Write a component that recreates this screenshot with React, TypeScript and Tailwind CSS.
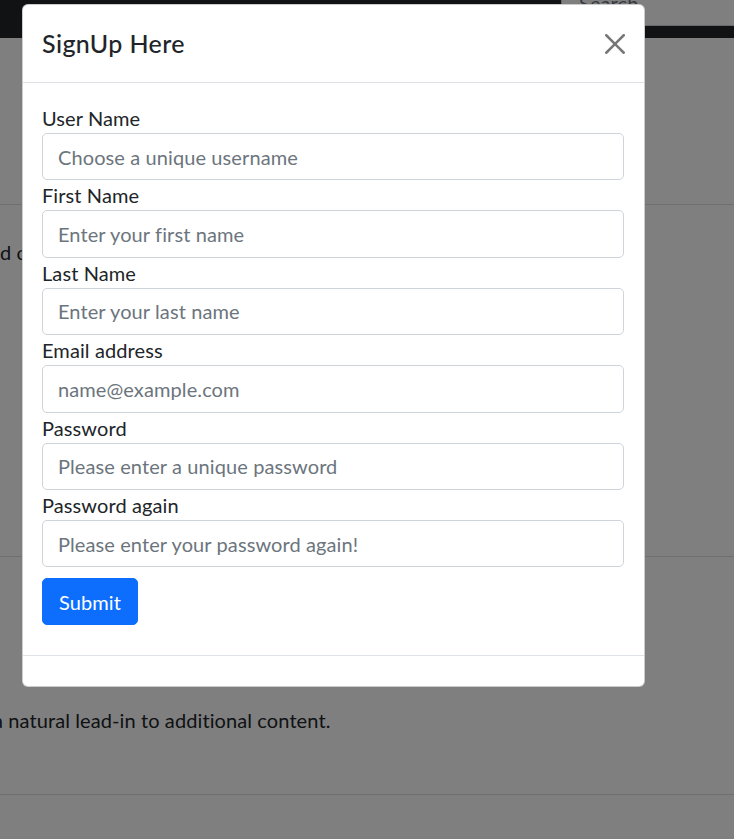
import React from "react";

const fields = [
  { label: "User Name", placeholder: "Choose a unique username", type: "text" },
  { label: "First Name", placeholder: "Enter your first name", type: "text" },
  { label: "Last Name", placeholder: "Enter your last name", type: "text" },
  { label: "Email address", placeholder: "name@example.com", type: "email" },
  { label: "Password", placeholder: "Please enter a unique password", type: "password" },
  { label: "Password again", placeholder: "Please enter your password again!", type: "password" },
];

export default function App() {
  return (
    <div className="relative h-[839px] w-[734px] overflow-hidden bg-white font-['Lato',sans-serif] tracking-[0.1px] text-[#212529]">
      {/* background page */}
      <nav className="flex h-[38px] justify-end overflow-hidden bg-[#212529]">
        <div className="-mr-[30px] -mt-[21px] flex h-[47px] w-[203px] shrink-0 items-center rounded-[5px] border border-[#ced4da] bg-white pl-[17px] text-[20px] text-[#6c757d]">
          Search
        </div>
      </nav>
      <div className="h-[167px] border-b border-[#dfdfdf]" />
      <div className="h-[352px] border-b border-[#dfdfdf] pt-[32px]">
        <p className="text-[20px] leading-[30px]">d co</p>
      </div>
      <div className="h-[238px] border-b border-[#dfdfdf] pt-[148px]">
        <p className="-ml-[7px] text-[20px] leading-[30px]">a natural lead-in to additional content.</p>
      </div>

      {/* backdrop */}
      <div className="absolute inset-0 bg-black/50" />

      {/* modal */}
      <div className="absolute left-[22px] top-[4px] w-[623px] rounded-[6px] border border-black/20 bg-white">
        <div className="flex h-[78px] items-center justify-between border-b border-[#dee2e6] pl-[19px] pr-[19px]">
          <h5 className="text-[25px] font-medium leading-[37.5px] tracking-[0.4px]">SignUp Here</h5>
          <button className="flex h-[21px] w-[21px] items-center justify-center text-[#777]" aria-label="Close">
            <svg viewBox="0 0 16 16" width="20" height="20" fill="currentColor">
              <path d="M.293.293a1 1 0 0 1 1.414 0L8 6.586 14.293.293a1 1 0 1 1 1.414 1.414L9.414 8l6.293 6.293a1 1 0 0 1-1.414 1.414L8 9.414l-6.293 6.293a1 1 0 0 1-1.414-1.414L6.586 8 .293 1.707a1 1 0 0 1 0-1.414z" />
            </svg>
          </button>
        </div>
        <form className="flex flex-col pb-[30px] pl-[19px] pr-[20px] pt-[20px]" onSubmit={(e) => e.preventDefault()}>
          {fields.map((f) => (
            <div key={f.label} className="flex flex-col">
              <label className="text-[20px] leading-[30px]">{f.label}</label>
              <input
                type={f.type}
                placeholder={f.placeholder}
                className="h-[47.4px] w-full rounded-[5px] border border-[#ced4da] bg-white px-[15px] text-[20px] tracking-[0.1px] text-[#212529] outline-none placeholder:text-[#6c757d]"
              />
            </div>
          ))}
          <div className="mt-[11px]">
            <button
              type="submit"
              className="h-[47px] rounded-[5px] border border-[#0d6efd] bg-[#0d6efd] px-[16px] text-[20px] leading-[30px] text-white"
            >
              Submit
            </button>
          </div>
        </form>
        <div className="h-[31px] border-t border-[#dee2e6]" />
      </div>
    </div>
  );
}
